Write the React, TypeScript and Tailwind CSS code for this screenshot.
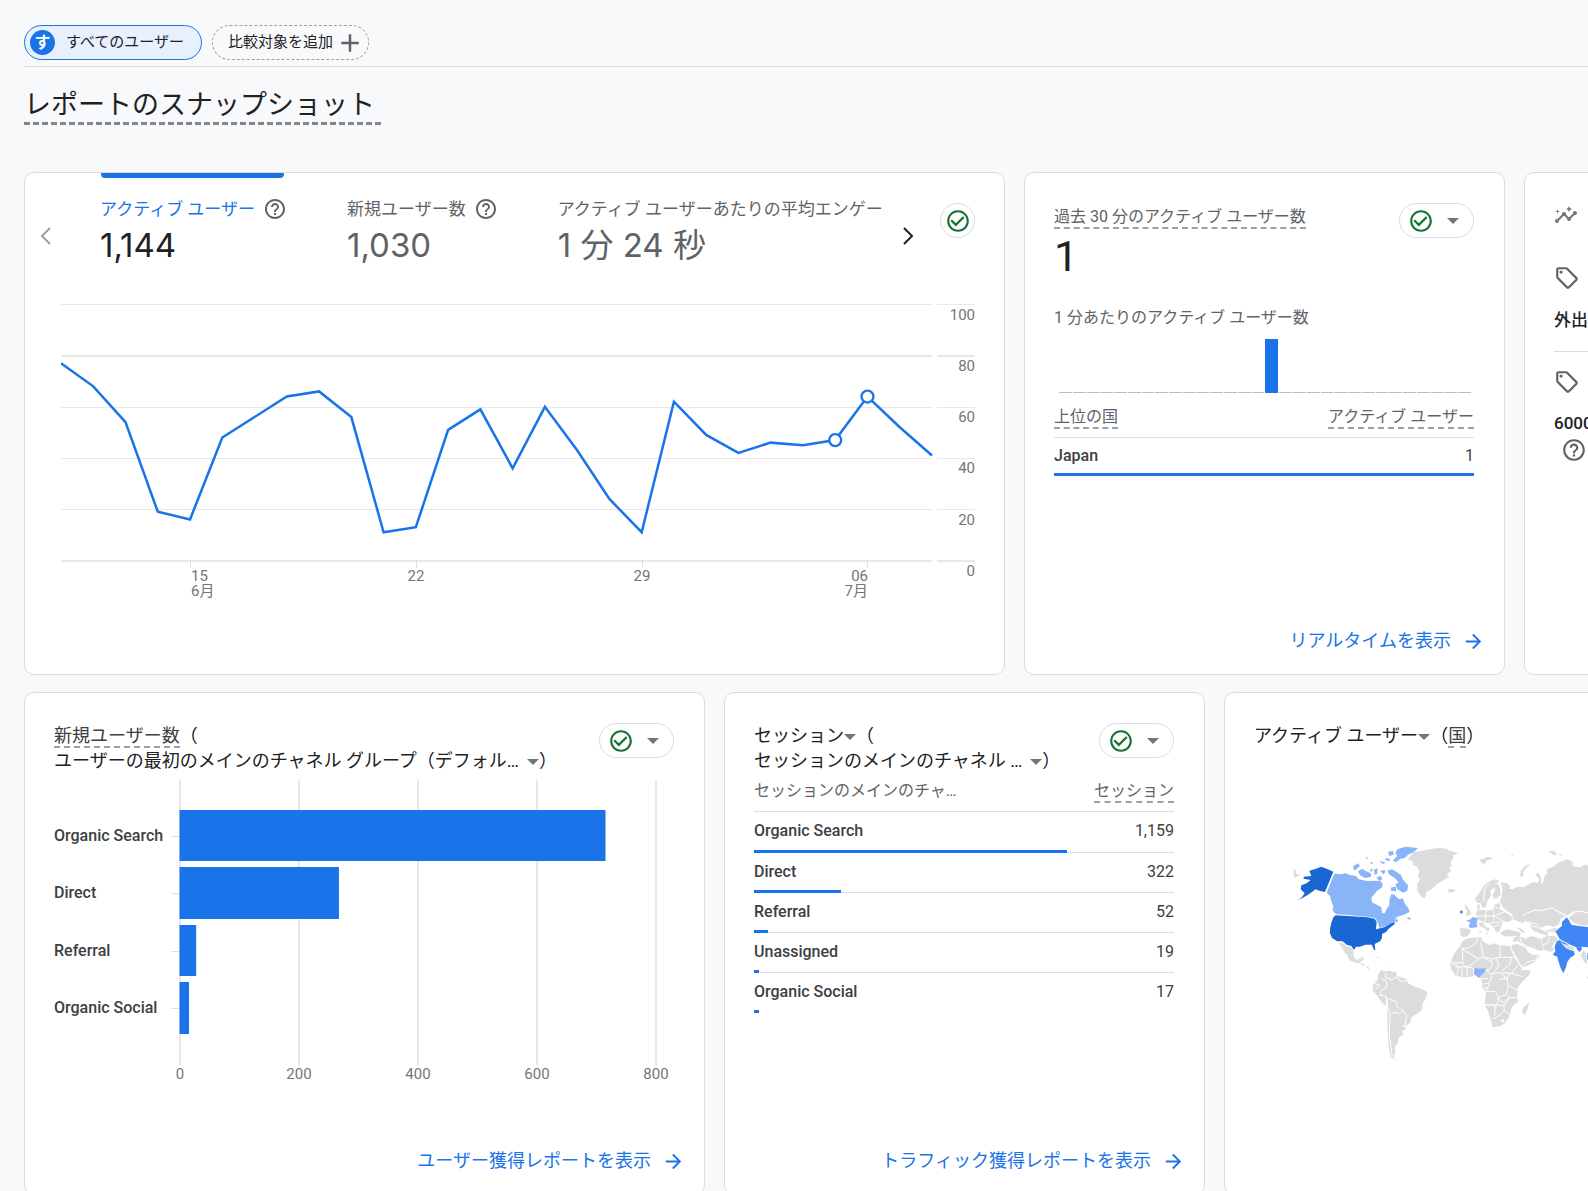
import React from "react";
import {
  MdAdd,
  MdArrowForward,
  MdCheckCircleOutline,
  MdHelpOutline,
  MdInsights,
  MdOutlineSell,
} from "react-icons/md";

const DAILY_USERS = [
  77, 68, 54, 19, 16, 48, 56, 64, 66, 56, 11, 13, 51, 59, 36, 60, 43, 24, 11,
  62, 49, 42, 46, 45, 47, 64, 52, 41,
];

const NEW_USERS = [
  { name: "Organic Search", value: 716 },
  { name: "Direct", value: 268 },
  { name: "Referral", value: 28 },
  { name: "Organic Social", value: 16 },
];

const SESSIONS = [
  { name: "Organic Search", value: "1,159", share: 74.6 },
  { name: "Direct", value: "322", share: 20.8 },
  { name: "Referral", value: "52", share: 3.4 },
  { name: "Unassigned", value: "19", share: 1.2 },
  { name: "Organic Social", value: "17", share: 1.2 },
];

const Caret = ({ className = "" }: { className?: string }) => (
  <svg
    viewBox="0 0 12 6"
    className={`inline-block h-[6px] w-3 fill-[#757575] ${className}`}
    aria-hidden="true"
  >
    <path d="M0 0h12L6 6z" />
  </svg>
);

const Chevron = ({ d, className }: { d: string; className: string }) => (
  <svg
    viewBox="0 0 32 32"
    className={`size-8 fill-none stroke-2 ${className}`}
    aria-hidden="true"
  >
    <path d={d} />
  </svg>
);

const Card = ({
  className = "",
  children,
}: {
  className?: string;
  children: React.ReactNode;
}) => (
  <section
    className={`flex min-h-[503px] min-w-0 flex-col rounded-[10px] border border-[#dadce0] bg-white ${className}`}
  >
    {children}
  </section>
);

const StatusMenu = () => (
  <button
    type="button"
    aria-label="データの品質"
    className="flex h-[35px] w-[75px] shrink-0 items-center justify-between rounded-full border border-[#dadce0] bg-white pr-[14px] pl-2"
  >
    <MdCheckCircleOutline className="size-[26px] text-[#137333]" />
    <Caret className="fill-[#5f6368]" />
  </button>
);

const CardTitle = ({ children }: { children: React.ReactNode }) => (
  <h2 className="pt-[30px] text-[18px] leading-[25px] whitespace-nowrap text-[#202124]">
    {children}
  </h2>
);

const CardLink = ({ children }: { children: React.ReactNode }) => (
  <a
    href="#"
    className="mt-auto mr-[19px] mb-[21px] flex items-center gap-[11px] self-end text-[18px] leading-6 text-[#1a73e8]"
  >
    {children}
    <MdArrowForward className="size-[23px]" />
  </a>
);

const Dashed = ({ children }: { children: React.ReactNode }) => (
  <span className="inline-block border-b-2 border-dashed border-[#9aa0a6] pt-1 leading-5">
    {children}
  </span>
);

const Header = () => (
  <header>
    <div className="flex gap-[10px] border-b border-[#dadce0] pt-[25px] pb-[6px]">
      <button
        type="button"
        className="flex h-[35px] items-center gap-[11px] rounded-full border border-[#1a73e8] bg-[#e8f0fe] pr-[17px] pl-[5px] text-[15px] text-[#202124]"
      >
        <span className="flex size-[25px] items-center justify-center rounded-full bg-[#1a73e8] text-[16px] leading-none font-bold text-white">
          す
        </span>
        すべてのユーザー
      </button>
      <button
        type="button"
        className="flex h-[35px] items-center gap-[2px] rounded-full border border-dashed border-[#9aa0a6] pr-[3px] pl-[15px] text-[15px] text-[#202124]"
      >
        比較対象を追加
        <MdAdd className="size-[30px] text-[#5f6368]" />
      </button>
    </div>
    <h1 className="mt-[22px] inline-block border-b-[3px] border-dashed border-[#80868b] pr-[6px] text-[27px] leading-[33px] text-[#202124]">
      レポートのスナップショット
    </h1>
  </header>
);

const Metric = ({
  label,
  value,
  active = false,
  help = true,
}: {
  label: string;
  value: string;
  active?: boolean;
  help?: boolean;
}) => (
  <button
    type="button"
    role="tab"
    aria-selected={active}
    className="flex shrink-0 flex-col items-start"
  >
    <span
      className={`mr-[3px] ml-px h-[5px] self-stretch rounded-b-[4px] ${active ? "bg-[#1a73e8]" : ""}`}
    />
    <span
      className={`mt-[19px] flex items-center gap-2 text-[17px] leading-6 whitespace-nowrap ${active ? "text-[#1a73e8]" : "text-[#5f6368]"}`}
    >
      {label}
      {help && <MdHelpOutline className="size-6 text-[#5f6368]" />}
    </span>
    <span
      className={`mt-1 font-[Inter,'Noto_Sans_CJK_JP',sans-serif] text-[33px] leading-10 whitespace-nowrap ${active ? "text-[#202124]" : "text-[#5f6368]"}`}
    >
      {value}
    </span>
  </button>
);

const LineChart = () => {
  const x = (i: number) => (i * 871) / 27;
  const y = (v: number) => 260.4 - v * 2.56;
  const points = DAILY_USERS.map((v, i) => `${x(i)},${y(v)}`).join(" ");
  const gridLines = [
    { value: 100, top: 4.5, width: 1 },
    { value: 80, top: 56, width: 2 },
    { value: 60, top: 107.5, width: 1 },
    { value: 40, top: 158.5, width: 1 },
    { value: 20, top: 209.5, width: 1 },
    { value: 0, top: 261, width: 2 },
  ];

  return (
    <svg
      viewBox="0 0 914 310"
      className="block h-auto w-full"
      role="img"
      aria-label="アクティブ ユーザーの推移"
    >
      {gridLines.map(({ value, top, width }) => (
        <g key={value}>
          <path
            d={`M0 ${top}H871M876 ${top}H914`}
            stroke="#e8e8e8"
            strokeWidth={width}
          />
          <text
            x="914"
            y={Math.floor(y(value)) + 16}
            textAnchor="end"
            className="fill-[#757575] text-[15px]"
          >
            {value}
          </text>
        </g>
      ))}
      {[4, 11, 18, 25].map((i) => (
        <path
          key={i}
          d={`M${Math.round(x(i)) + 0.5} 260v8`}
          stroke="#e0e0e0"
        />
      ))}
      <g className="fill-[#757575] text-[15px]">
        <text x="130" y="281">15</text>
        <text x="130" y="296">6月</text>
        <text x="355" y="281" textAnchor="middle">22</text>
        <text x="581" y="281" textAnchor="middle">29</text>
        <text x="807" y="281" textAnchor="end">06</text>
        <text x="807" y="296" textAnchor="end">7月</text>
      </g>
      <polyline points={points} fill="none" stroke="#1a73e8" strokeWidth="2.5" />
      {[24, 25].map((i) => (
        <circle
          key={i}
          cx={x(i)}
          cy={y(DAILY_USERS[i])}
          r="6"
          fill="#fff"
          stroke="#1a73e8"
          strokeWidth="2.3"
        />
      ))}
    </svg>
  );
};

const OverviewCard = () => (
  <Card>
    <div className="flex items-start pr-[29px] pl-[5px]">
      <button type="button" aria-label="前へ" className="mt-[47px]">
        <Chevron d="M20 8l-8 8 8 8" className="stroke-[#9e9e9e]" />
      </button>
      <div
        role="tablist"
        className="ml-[38px] flex min-w-0 flex-1 gap-[60px] overflow-hidden"
      >
        <Metric label="アクティブ ユーザー" value="1,144" active />
        <Metric label="新規ユーザー数" value="1,030" />
        <Metric
          label="アクティブ ユーザーあたりの平均エンゲー"
          value="1 分 24 秒"
          help={false}
        />
      </div>
      <button type="button" aria-label="次へ" className="mt-[47px] ml-[7px]">
        <Chevron d="M12 8l8 8-8 8" className="stroke-[#202124]" />
      </button>
      <button
        type="button"
        aria-label="データの品質"
        className="mt-[30px] ml-[16px] flex size-[35px] items-center justify-center rounded-full border border-[#dadce0]"
      >
        <MdCheckCircleOutline className="size-[26px] text-[#137333]" />
      </button>
    </div>
    <div className="mt-[35px] pr-[29px] pl-[36px]">
      <LineChart />
    </div>
  </Card>
);

const RealtimeCard = () => (
  <Card>
    <div className="pt-[30px] pr-[30px] pl-[29px]">
      <div className="flex items-start justify-between">
        <div className="text-[16px] whitespace-nowrap text-[#5f6368]">
          <Dashed>過去 30 分のアクティブ ユーザー数</Dashed>
        </div>
        <StatusMenu />
      </div>
      <p className="-mt-[6px] text-[43px] leading-[48px] text-[#202124]">1</p>
      <p className="mt-[26px] text-[16px] leading-6 text-[#5f6368]">
        1 分あたりのアクティブ ユーザー数
      </p>
      <div className="mt-[9px] mr-[3px] ml-[5px] flex h-[54px] items-end gap-px">
        {Array.from({ length: 30 }, (_, i) => (
          <div
            key={i}
            className={`flex-1 ${i === 15 ? "h-full bg-[#1a73e8]" : "h-px bg-[#bdbdbd]"}`}
          />
        ))}
      </div>
      <table className="mt-[10px] w-full border-separate border-spacing-0 text-[16px]">
        <thead>
          <tr className="text-[#5f6368]">
            <th className="border-b border-[#dadce0] p-0 pb-2 text-left font-normal">
              <Dashed>上位の国</Dashed>
            </th>
            <th className="border-b border-[#dadce0] p-0 pb-2 text-right font-normal">
              <Dashed>アクティブ ユーザー</Dashed>
            </th>
          </tr>
        </thead>
        <tbody>
          <tr className="relative h-[38px] text-[#3c4043]">
            <td className="p-0 pb-[2px] font-medium">
              Japan
              <div className="absolute bottom-0 left-0 h-[3px] w-full bg-[#1a73e8]" />
            </td>
            <td className="p-0 pb-[2px] text-right">1</td>
          </tr>
        </tbody>
      </table>
    </div>
    <CardLink>リアルタイムを表示</CardLink>
  </Card>
);

const InsightsCard = () => (
  <Card className="pt-[30px] pl-[29px] text-[17px] font-medium text-[#202124]">
    <MdInsights className="size-6 text-[#757575]" />
    <MdOutlineSell className="mt-[38px] size-[26px] text-[#5f6368]" />
    <p className="mt-[17px] leading-6">外出</p>
    <hr className="mt-[19px] mb-[17px] border-[#dadce0]" />
    <MdOutlineSell className="size-[26px] text-[#5f6368]" />
    <p className="mt-[16px] leading-6">6000</p>
    <MdHelpOutline className="mt-[2px] ml-[7px] size-[26px] text-[#5f6368]" />
  </Card>
);

const BarChart = () => {
  const x = (v: number) => 126 + v * 0.595;

  return (
    <svg
      viewBox="0 0 620 310"
      className="block h-auto w-full overflow-visible"
      role="img"
      aria-label="チャネル グループ別の新規ユーザー数"
    >
      {[0, 200, 400, 600, 800].map((v) => (
        <g key={v}>
          <path d={`M${x(v)} 0V285`} stroke="#e0e0e3" strokeWidth="1.5" />
          <text
            x={x(v)}
            y="299"
            textAnchor="middle"
            className="fill-[#757575] text-[15px]"
          >
            {v}
          </text>
        </g>
      ))}
      {NEW_USERS.map(({ name, value }, i) => (
        <g key={name}>
          <path d={`M117 ${Math.round(55.5 + i * 57.5)}.5h9`} stroke="#e0e0e3" />
          <rect
            x="125.5"
            y={Math.round(30 + i * 57.4)}
            width={value * 0.595}
            height={i === 0 || i === 2 ? 51 : 52}
            fill="#1a73e8"
          />
          <text
            x="0"
            y={Math.round(61 + i * 57.4)}
            className="fill-[#3c4043] text-[16px] font-medium"
          >
            {name}
          </text>
        </g>
      ))}
    </svg>
  );
};

const NewUsersCard = () => (
  <Card>
    <div className="pr-[30px] pl-[29px]">
      <div className="flex items-start justify-between">
        <CardTitle>
          <span className="border-b-2 border-dashed border-[#9aa0a6] text-[#3c4043]">
            新規ユーザー数
          </span>
          （<br />
          ユーザーの最初のメインのチャネル グループ（デフォル…
          <Caret className="ml-2" />）
        </CardTitle>
        <div className="-ml-10 pt-[30px]">
          <StatusMenu />
        </div>
      </div>
      <div className="mt-[7px]">
        <BarChart />
      </div>
    </div>
    <CardLink>ユーザー獲得レポートを表示</CardLink>
  </Card>
);

const SessionsCard = () => (
  <Card>
    <div className="pr-[30px] pl-[29px]">
      <div className="flex items-start justify-between">
        <CardTitle>
          セッション
          <Caret />（<br />
          セッションのメインのチャネル …
          <Caret className="ml-2" />）
        </CardTitle>
        <div className="pt-[30px]">
          <StatusMenu />
        </div>
      </div>
      <table className="mt-1 w-full border-separate border-spacing-0 text-[16px]">
        <thead>
          <tr className="text-[#5f6368]">
            <th className="border-b border-[#dadce0] p-0 pt-1 pb-2 text-left align-top leading-5 font-normal">
              セッションのメインのチャ…
            </th>
            <th className="border-b border-[#dadce0] p-0 pb-2 text-right font-normal">
              <Dashed>セッション</Dashed>
            </th>
          </tr>
        </thead>
        <tbody>
          {SESSIONS.map(({ name, value, share }) => (
            <tr
              key={name}
              className="group relative h-10 text-[#3c4043] first:h-[41px]"
            >
              <td className="border-b border-[#dadce0] p-0 pb-[2px] font-medium group-last:border-transparent">
                {name}
                <div
                  className="absolute bottom-0 left-0 h-[3px] bg-[#1a73e8]"
                  style={{ width: `${share}%` }}
                />
              </td>
              <td className="border-b border-[#dadce0] p-0 pb-[2px] text-right group-last:border-transparent">
                {value}
              </td>
            </tr>
          ))}
        </tbody>
      </table>
    </div>
    <CardLink>トラフィック獲得レポートを表示</CardLink>
  </Card>
);

const WorldMap = () => (
  <svg
    viewBox="0 0 924 720"
    className="block w-[308px] overflow-visible"
    role="img"
    aria-label="国別のアクティブ ユーザー"
    strokeLinejoin="round"
  >
    <g fill="#dcdcdc">
      {/* Greenland, Iceland and the northern islands */}
      <path d="M382 88L390 80 402 66 430 62 456 56 480 54 500 56 508 62 536 70 520 76 518 90 510 96 516 108 508 112 514 124 500 132 508 140 492 150 474 160 456 176 440 186 434 206 422 198 412 182 412 160 420 150 414 138 418 122 408 108 394 102 404 98z" />
      <path d="M502 182L508 176 524 178 526 184 512 188z" />
      <path d="M598 88L612 86 620 80 636 82 634 88 620 92 612 104 604 96zM690 78l8-4 2 4z" />
      <path d="M720 140L722 124 736 108 752 100 738 114 730 126 730 138z" />
      <path d="M806 64L820 62 832 72 822 76zM836 74l8-2v6z" />
      {/* Central America and the Caribbean */}
      <path d="M174 338L188 338 200 348 212 352 220 362 222 380 230 390 240 386 246 380 252 384 246 392 238 400 226 398 208 390 202 376 192 366 186 352zM180 350l4 12-4-4z" />
      <path d="M238 400L252 402 254 408 246 406zM258 408l8 2 2 10-6-6zM282 378l16 6-2 2zM304 388l16 4v2z" />
      {/* South America */}
      <path d="M296 430L304 420 312 424 328 422 340 426 348 424 350 438 366 442 380 448 384 460 400 468 424 476 442 486 438 504 428 520 426 540 410 552 396 560 390 578 380 586 380 596 366 602 370 612 356 624 352 640 344 652 346 668 340 680 348 690 332 680 326 650 324 620 322 580 322 530 306 518 294 500 280 484 278 466 284 460 292 450z" />
      {/* Europe */}
      <path d="M586 204L596 192 604 180 612 166 628 154 646 148 658 152 650 160 644 172 630 182 634 196 622 214 618 230 608 234 602 218 594 220 588 214z" />
      <path d="M644 162L656 158 660 178 662 196 654 206 642 208 638 196 644 182z" />
      <path d="M554 222L562 230 572 246 572 254 556 258 562 244 556 236zM592 224l6-2 2 14-8 4z" />
      <path d="M588 246L596 240 614 240 622 242 640 238 644 226 652 216 660 220 660 236 672 246 690 256 700 268 686 276 668 274 664 290 656 306 648 308 644 296 636 286 624 280 606 274 596 270 590 262z" />
      <path d="M596 280L608 276 614 288 630 298 624 306 612 294 600 288zM600 298l4 12-6-2zM616 308l8 2-2 4zM658 316l10 2z" />
      <path d="M540 294L566 296 574 302 562 318 550 322 542 316z" />
      {/* Russia and Central Asia */}
      <path d="M662 156L682 160 692 170 686 176 698 178 712 170 730 172 744 164 758 156 772 160 778 150 766 132 776 128 784 146 782 164 790 156 792 142 802 128 800 118 820 110 834 98 862 88 878 96 878 108 900 112 914 104 930 108V250L904 244 880 246 862 258 836 244 816 234 780 240 762 240 744 250 730 258 736 272 730 280 716 274 700 268 696 252 682 244 670 234 660 216 664 200 668 180z" />
      <path d="M728 258L744 246 764 242 780 242 816 234 836 246 858 258 842 266 836 284 820 290 800 286 780 296 756 286 744 276 732 272z" />
      <path d="M748 286L776 296 800 302 822 294 836 296 824 308 804 306 806 318 784 312 760 302 754 294z" />
      <path d="M662 306L680 298 704 302 722 308 720 318 700 318 678 320 664 314zM710 292l18 6 8 12-12-4z" />
      <path d="M698 322L720 318 740 324 754 318 782 326 786 344 790 362 772 360 750 350 738 348 724 340 712 334 700 336z" />
      <path d="M784 326L800 318 824 318 834 326 822 340 816 350 824 358 812 366 792 360z" />
      <path d="M696 344L712 342 736 352 744 366 758 374 776 374 778 382 764 396 740 408 728 412 716 394 704 372 694 354z" />
      <path d="M848 342L860 344 882 352 880 360 862 356zM902 376l10-16 8 22 2 20-10-6zM860 430l4 6-4 2z" />
      <path d="M886 246L904 246 930 250V286L900 286 878 276 866 264z" />
      {/* Africa */}
      <path d="M546 336L558 326 592 322 604 322 608 334 630 346 640 340 660 346 690 348 694 362 704 384 718 404 728 420 752 420 748 434 730 452 718 466 712 478 712 500 714 516 700 526 692 540 690 556 678 576 662 588 638 592 632 570 624 544 614 524 616 504 618 486 606 474 606 456 602 444 584 436 568 442 544 442 526 436 514 418 510 402 516 386 524 368 538 352z" />
      <path d="M748 514L740 524 730 532 726 548 734 556 742 540z" />
      <path d="M42 118l8 4-2 10 12 2-10 6-4 4-6-10z" />
    </g>

    <g fill="none" stroke="#fff" strokeWidth="3">
      <path d="M302 444l18 10v18l-16 10-4 14 18 2 2 34M286 478l14-12-16-6M318 428l-2 14 18 8 18-10M352 440l8 14 22-2M320 504l26 10 8 18 18 12-14 6-18-2-10 6-6-22zM372 544l8 16-6 26 12 10M330 556l-2 60 8 60M368 586l12 8" />
      <path d="M628 158l-14 18-4 40M668 180l-10-16-12-4M662 198l-22 12M640 238l2 36M618 240l-2 34M664 290l6-16-26-16h-54M644 258l28-12M624 280l38-4M640 292l20-10M660 236l-16-6M656 220l-14 2" />
      <path d="M728 258l16-10 20-8 16 2 36-8 20 12 26 12 18-12 24-2 26 6" />
      <path d="M744 276l24 6 16 14 18 12 20-6M780 296l20-8M722 318l18 8M738 348l-16-14-2-16M808 320l-4 18-18 8M696 344l20-12" />
      <path d="M728 410l14-14 26-6 6-14M690 348l14-30" />
      <path d="M592 322l-2 16-24 16-22 2M548 354v44h-34M548 358l46 28-14 16-24 10-8-14M594 386l12-4 30 12v14l-14 16M602 338l8 42M660 346v36h40M610 380l28 8 12-6h10M650 384l6 24-20 26M526 412l30-2 24 4 2 26M538 410l-8 28M546 416v26M560 412l2 28M516 402l20 6M616 414l14 18 24-4 40 2 20-24M694 380l-4 24-24 18M694 430l34 10M690 430l-10 16 4 20 28 14M636 434l-8 26-20 2M628 460l-10 24h28l10 20-6 24-36-4M606 474h20M656 448l28-2M684 466l-4 28-24 8M650 504l22 14 14-14 26-2M614 524l58 2v16l-16 16-20 10M646 528l-2 30M672 526l12-16 4-14M672 542l14 8 4 8M664 432l18 14M602 446h22" />
    </g>
    <circle cx="668" cy="572" r="5" fill="#fff" />

    {/* Countries with users */}
    <g fill="#8ab4f8">
      <path d="M163 130L180 133 196 130 212 136 228 138 236 148 262 153 285 152 302 154 308 162 306 172 290 184 274 203 276 217 286 222 304 232 306 248 314 250 320 236 328 226 328 210 334 192 344 194 352 204 360 208 368 204 374 220 386 236 388 246 372 254 352 260 344 268 354 272 340 276 330 282 316 288 298 294 294 278 286 264 262 260 168 252 158 242 160 230 154 214 150 198 140 188z" />
      <path d="M352 58L376 50 414 54 402 66 384 74 374 84 362 86 348 96 338 92 352 78 346 68z" />
      <path d="M324 66L338 62 342 74 328 78zM298 92L318 98 308 102zM316 84l14 2-2 8-12-4z" />
      <path d="M234 124L246 116 256 122 272 130 274 140 256 144 240 136zM218 110L234 100 240 108 224 122zM256 84l8-2-2 6zM268 98l12-2-4 6z" />
      <path d="M322 122L336 118 350 126 362 134 370 150 384 166 382 182 370 188 352 178 346 162 356 158 344 144 328 134z" />
      <path d="M282 120L292 114 292 132 284 134zM300 122L316 120 312 134zM290 142L304 138 306 150 296 152zM334 172L348 170 348 184 332 182zM268 120l10-4-2 10zM378 264l12-2 2 8zM346 264l8 6-4 10z" />
      <path d="M558 270L568 270 580 260 594 266 590 278 592 292 572 294 566 290 570 278z" />
      <path d="M584 414L600 416 618 414 614 426 606 434 596 444 590 438 582 432z" />
    </g>
    <g fill="#1967d2">
      <path d="M88 122L108 116 124 110 140 116 160 125 135 186 118 182 106 178 96 186 84 194 62 207 74 190 62 178 64 166 80 160 92 150 70 146 72 140 94 138z" />
      <path d="M50 212L76 196 62 206z" />
      <path d="M167 256L262 262 284 266 290 276 288 298 312 292 334 280 344 276 344 282 326 296 318 306 306 312 306 324 300 334 284 342 286 362 280 356 276 344 256 344 240 350 228 350 222 360 214 348 200 344 188 334 172 334 156 324 150 310 150 296 154 278 160 262z" />
    </g>
    <g fill="#4285f4">
      <path d="M826 306L838 294 846 288 846 276 860 262 868 272 874 284 896 288 930 292V352L904 350 890 354 872 346 850 342 838 328z" />
      <path d="M830 334L840 330 848 344 860 356 882 364 884 374 870 384 862 396 858 412 850 430 842 414 834 390 832 380 818 374 826 364 824 350z" />
      <path d="M888 354L904 350 906 358 898 366zM922 370L930 362V396L922 388zM920 442l10 4v4z" />
      <path d="M540 242h8v8h-8z" />
    </g>
    <path
      d="M826 306l12 22 34 18 18 8M163 127l-26 61"
      fill="none"
      stroke="#fff"
      strokeWidth="3"
    />
  </svg>
);

const CountriesCard = () => (
  <Card className="pl-[29px]">
    <CardTitle>
      アクティブ ユーザー
      <Caret />（
      <span className="border-b-2 border-dashed border-[#9aa0a6] text-[#3c4043]">
        国
      </span>
      ）
    </CardTitle>
    <div className="mt-[82px] ml-[26px]">
      <WorldMap />
    </div>
  </Card>
);

const App = () => {
  return (
    <div
      lang="ja"
      className="h-screen overflow-hidden bg-[#f8f9fb] pl-6 font-[Roboto,'Noto_Sans_CJK_JP',sans-serif]"
    >
      <Header />
      {/* The report grid is wider than the viewport and runs off to the right */}
      <main className="mt-[47px] flex w-[calc(125%+26px)] flex-col gap-[17px]">
        <div className="grid grid-cols-[981fr_481fr_481fr] gap-[19px]">
          <OverviewCard />
          <RealtimeCard />
          <InsightsCard />
        </div>
        <div className="grid grid-cols-[681fr_481fr_781fr] gap-[19px]">
          <NewUsersCard />
          <SessionsCard />
          <CountriesCard />
        </div>
      </main>
    </div>
  );
};

export default App;
